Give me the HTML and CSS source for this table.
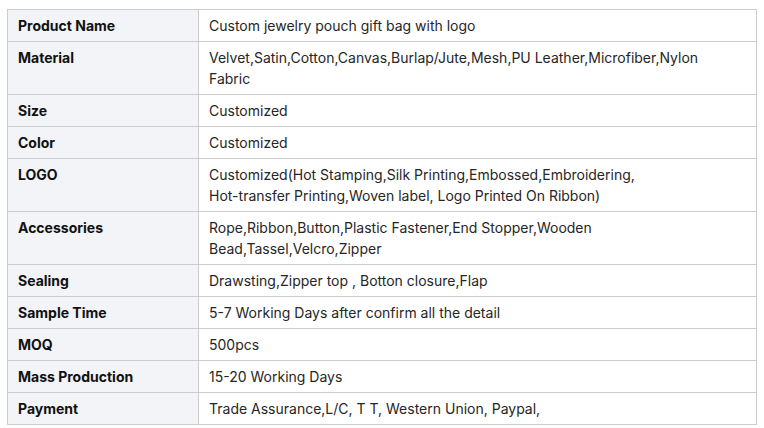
FILE: index.html
```html
<!DOCTYPE html>
<html>
<head>
<meta charset="utf-8">
<link rel="stylesheet" href="styles.css">
</head>
<body>
<table class="spec">
  <tbody>
    <tr><th>Product Name</th><td>Custom jewelry pouch gift bag with logo</td></tr>
    <tr><th>Material</th><td>Velvet,Satin,Cotton,Canvas,Burlap/Jute,Mesh,PU Leather,Microfiber,Nylon Fabric</td></tr>
    <tr><th>Size</th><td>Customized</td></tr>
    <tr><th>Color</th><td>Customized</td></tr>
    <tr><th>LOGO</th><td>Customized(Hot Stamping,Silk Printing,Embossed,Embroidering, <span class="nowrap">Hot-transfer</span> Printing,Woven label, Logo Printed On Ribbon)</td></tr>
    <tr><th>Accessories</th><td>Rope,Ribbon,Button,Plastic Fastener,End Stopper,Wooden Bead,Tassel,Velcro,Zipper</td></tr>
    <tr><th>Sealing</th><td>Drawsting,Zipper top , Botton closure,Flap</td></tr>
    <tr><th>Sample Time</th><td>5-7 Working Days after confirm all the detail</td></tr>
    <tr><th>MOQ</th><td>500pcs</td></tr>
    <tr><th>Mass Production</th><td>15-20 Working Days</td></tr>
    <tr><th>Payment</th><td>Trade Assurance,L/C, T T, Western Union, Paypal,</td></tr>
  </tbody>
</table>
</body>
</html>
```

FILE: styles.css
```css
html, body {
  margin: 0;
  padding: 0;
  background: #ffffff;
}
body {
  padding: 9px 0 0 7px;
  font-family: Inter, "Noto Sans", sans-serif;
  font-size: 14px;
  line-height: 21px;
  color: #222222;
}
.spec {
  border-collapse: collapse;
  width: 750px;
  table-layout: fixed;
}
.spec th, .spec td {
  border: 1px solid #cccccc;
  padding: 5px 10px;
  vertical-align: top;
  text-align: left;
}
.spec th {
  width: 170px;
  background: #f3f4f8;
  font-weight: 700;
  color: #111111;
}
.spec td {
  padding-right: 50px;
  font-weight: 400;
  color: #262626;
}
.nowrap {
  white-space: nowrap;
}
```
